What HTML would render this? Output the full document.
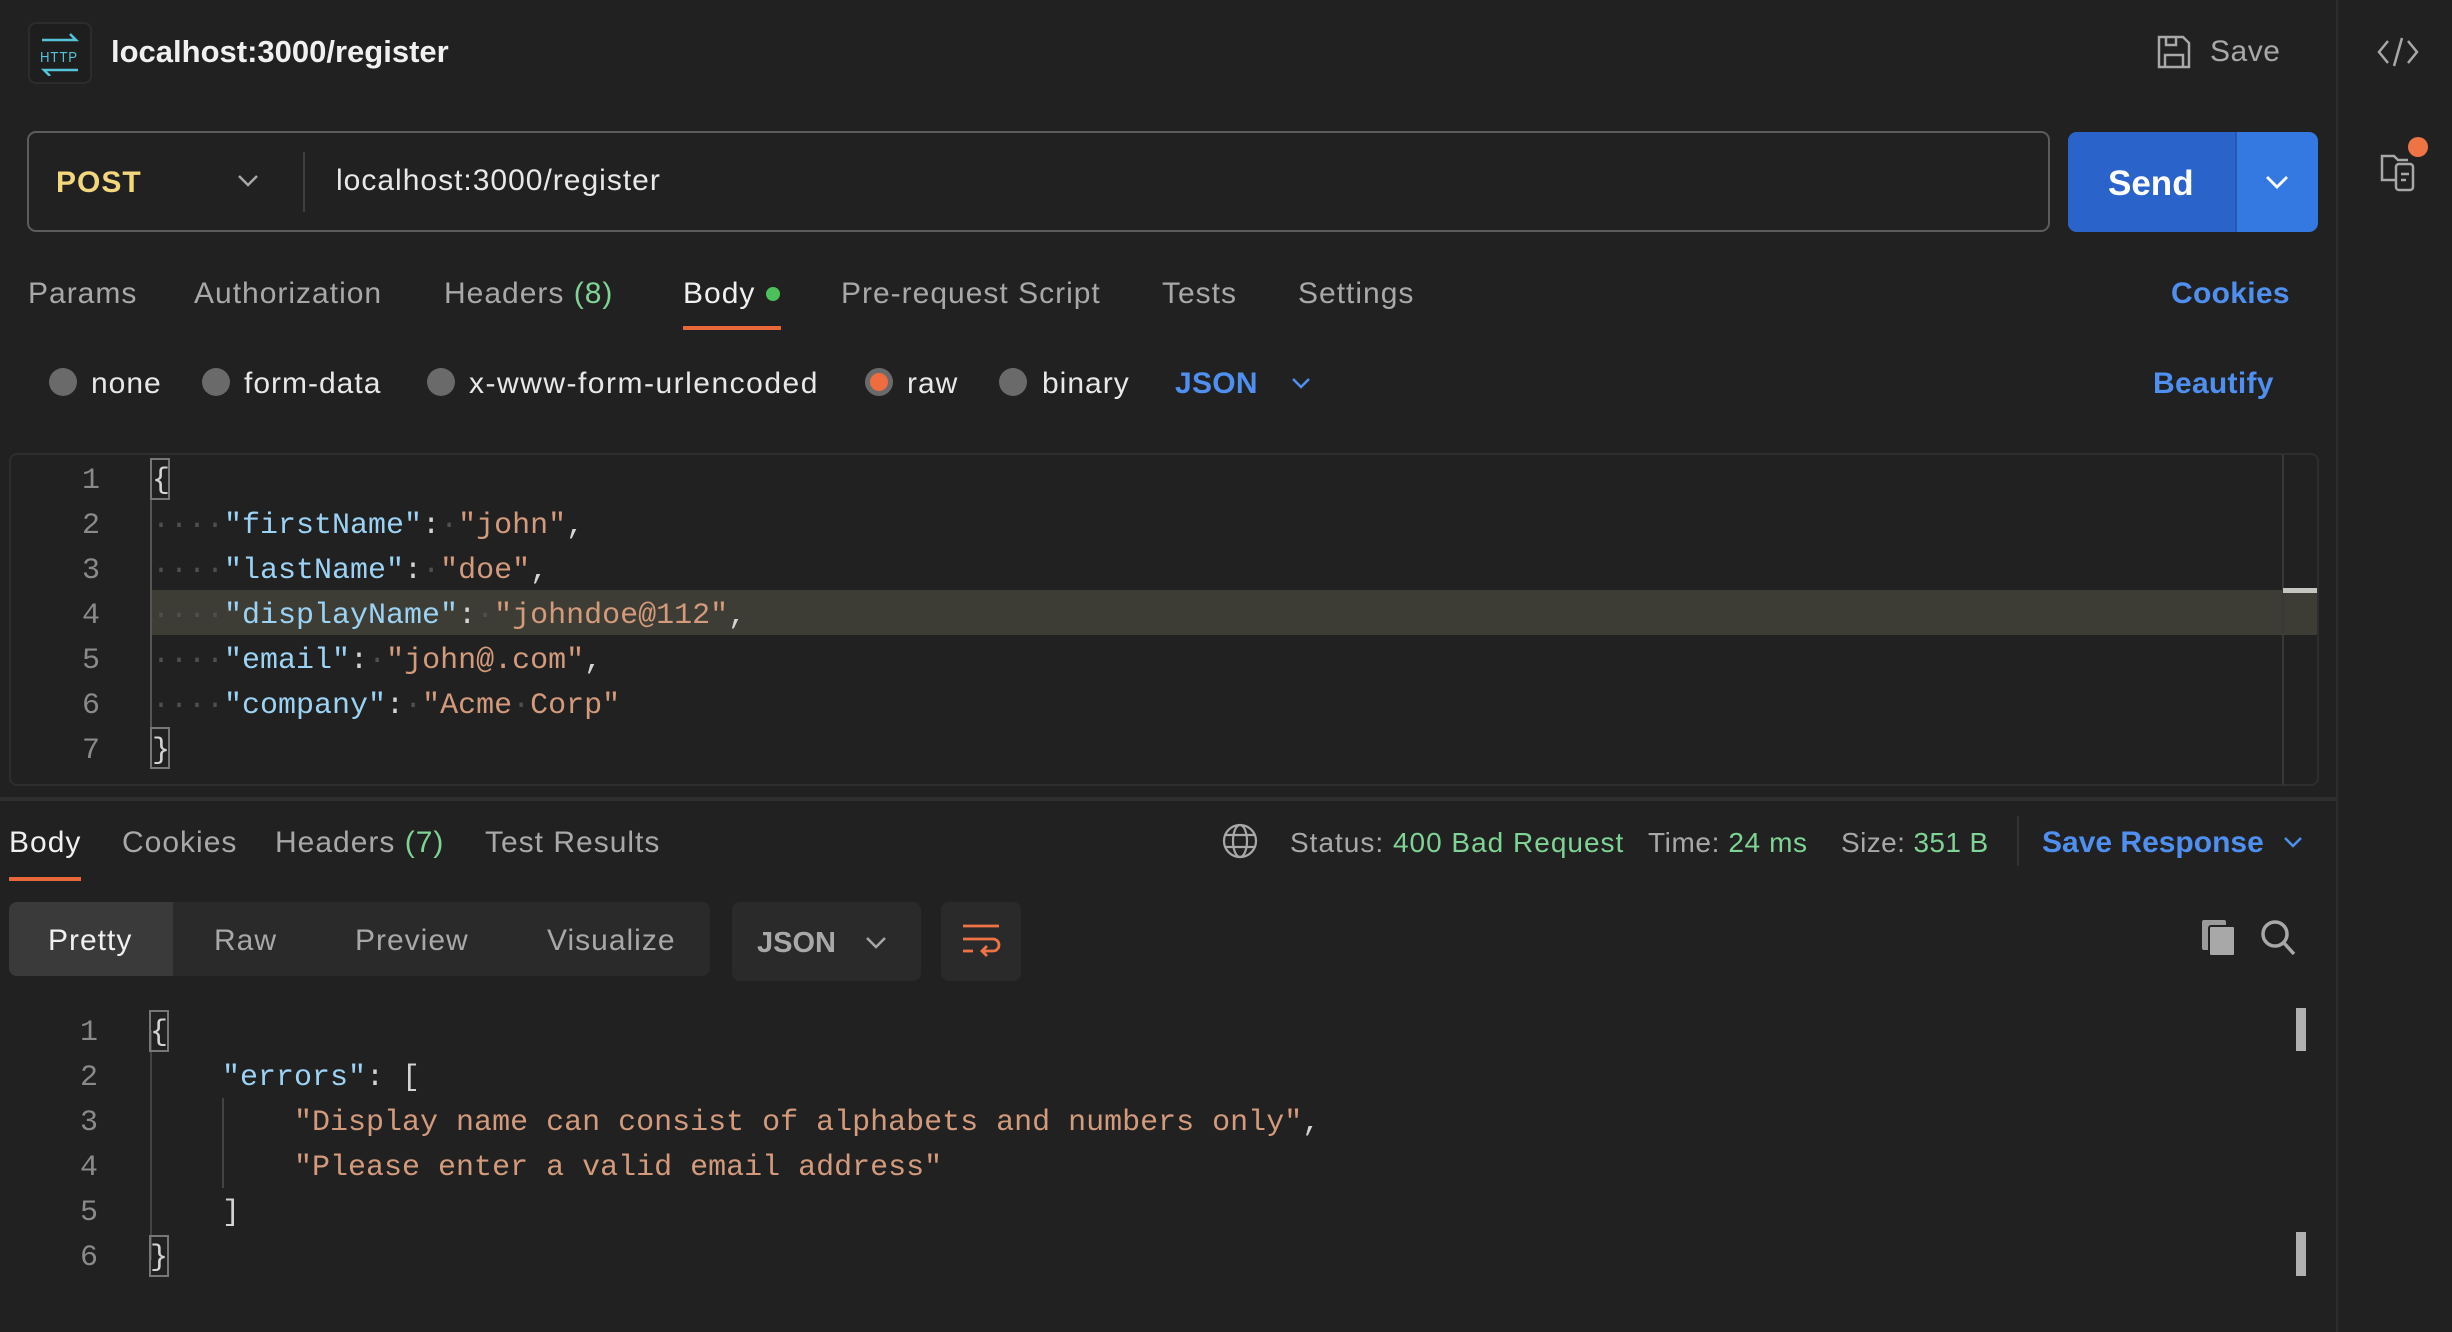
<!DOCTYPE html>
<html><head><meta charset="utf-8"><style>
*{margin:0;padding:0;box-sizing:border-box}
body{width:2452px;height:1332px;background:#212121;font-family:"Liberation Sans",sans-serif;color:#a8a8a8;position:relative;overflow:hidden;letter-spacing:1px}
.a{position:absolute;white-space:nowrap}
.t{font-size:30px;line-height:36px}
.mono{font-family:"Liberation Mono",monospace;font-size:30px;line-height:45px;letter-spacing:0}
.ln{position:absolute;width:60px;text-align:right;left:40px;color:#8a8a8a;font-family:"Liberation Mono",monospace;font-size:30px;letter-spacing:0}
.k{color:#9cd3f5}.s{color:#d39a7c}.p{color:#d4d4d4}.d{color:#4f4f4f}
.blue{color:#4f8ff0;letter-spacing:0.3px}.green{color:#7fd394}
.radio{position:absolute;width:28px;height:28px;border-radius:50%;background:#6a6a6a}
</style></head><body>

<div class="a" style="left:28px;top:22px;width:64px;height:62px;border:2px solid #2c2c2c;border-radius:8px;background:#1e1e1e"></div>
<svg class="a" style="left:36px;top:32px" width="48" height="44" viewBox="0 0 48 44"><path d="M6 8H40L34 2M42 38H8l6 6" stroke="#56c4d8" stroke-width="2.5" fill="none"/><text x="4" y="30" font-family="Liberation Sans" font-size="15" fill="#56c4d8" textLength="38" lengthAdjust="spacingAndGlyphs">HTTP</text></svg>
<div class="a" style="left:111px;top:32px;font-size:31px;line-height:40px;color:#f0f0f0;font-weight:bold;letter-spacing:0">localhost:3000/register</div>

<svg class="a" style="left:2156px;top:34px" width="36" height="36" viewBox="0 0 36 36" fill="none" stroke="#a8a8a8" stroke-width="2.5"><path d="M3 3h24l6 6v24H3z"/><path d="M10 3v8h10V3"/><path d="M9 33V21h18v12"/></svg>
<div class="a t" style="left:2210px;top:34px;font-size:30px;letter-spacing:0.5px">Save</div>

<div class="a" style="left:2336px;top:0;width:2px;height:1332px;background:#2c2c2c"></div>
<svg class="a" style="left:2376px;top:34px" width="44" height="36" viewBox="0 0 44 36" fill="none" stroke="#a8a8a8" stroke-width="2.5"><path d="M12 7L3 18l9 11M32 7l9 11-9 11M26 4l-8 28"/></svg>
<svg class="a" style="left:2378px;top:150px" width="40" height="44" viewBox="0 0 40 44" fill="none" stroke="#a8a8a8" stroke-width="2.5"><path d="M17 30H4V6h12l4 4h10"/><rect x="18" y="14" width="17" height="26" rx="3"/><path d="M23 24h8M23 30h5"/></svg>
<div class="a" style="left:2408px;top:137px;width:20px;height:20px;border-radius:50%;background:#ee7345"></div>

<div class="a" style="left:27px;top:131px;width:2023px;height:101px;border:2px solid #5c5c5c;border-radius:9px"></div>
<div class="a" style="left:56px;top:165px;font-size:30px;line-height:36px;font-weight:bold;color:#f3d77c">POST</div>
<svg class="a" style="left:236px;top:173px" width="24" height="16" viewBox="0 0 24 16"><path d="M3 3l9 9 9-9" stroke="#a8a8a8" stroke-width="2.5" fill="none"/></svg>
<div class="a" style="left:303px;top:152px;width:2px;height:60px;background:#3e3e3e"></div>
<div class="a" style="left:336px;top:163px;font-size:30px;line-height:36px;color:#e8e8e8">localhost:3000/register</div>

<div class="a" style="left:2068px;top:132px;width:250px;height:100px;border-radius:9px;background:#3479e2;overflow:hidden"><div style="width:169px;height:100px;background:#2a64cb;border-right:2px solid #2758b0"></div></div>
<div class="a" style="left:2108px;top:164px;font-size:35px;line-height:40px;font-weight:bold;color:#fff;letter-spacing:0">Send</div>
<svg class="a" style="left:2264px;top:174px" width="26" height="18" viewBox="0 0 26 18"><path d="M3 3l10 10 10-10" stroke="#fff" stroke-width="2.8" fill="none"/></svg>

<div class="a t" style="left:28px;top:276px">Params</div>
<div class="a t" style="left:194px;top:276px">Authorization</div>
<div class="a t" style="left:444px;top:276px">Headers <span class="green">(8)</span></div>
<div class="a t" style="left:683px;top:276px;color:#f0f0f0">Body</div>
<div class="a" style="left:766px;top:287px;width:14px;height:14px;border-radius:50%;background:#4dbf5b"></div>
<div class="a" style="left:683px;top:326px;width:98px;height:4px;background:#e8683a"></div>
<div class="a t" style="left:841px;top:276px">Pre-request Script</div>
<div class="a t" style="left:1162px;top:276px">Tests</div>
<div class="a t" style="left:1298px;top:276px">Settings</div>
<div class="a t blue" style="left:2171px;top:276px;font-weight:bold">Cookies</div>

<div class="radio" style="left:49px;top:368px"></div><div class="a t" style="left:91px;top:366px;color:#e8e8e8">none</div>
<div class="radio" style="left:202px;top:368px"></div><div class="a t" style="left:244px;top:366px;color:#e8e8e8">form-data</div>
<div class="radio" style="left:427px;top:368px"></div><div class="a t" style="left:469px;top:366px;color:#e8e8e8;letter-spacing:1.5px">x-www-form-urlencoded</div>
<div class="radio" style="left:865px;top:368px;background:#ee6c3f;border:5px solid #6a6a6a"></div><div class="a t" style="left:907px;top:366px;color:#e8e8e8">raw</div>
<div class="radio" style="left:999px;top:368px"></div><div class="a t" style="left:1042px;top:366px;color:#e8e8e8">binary</div>
<div class="a t blue" style="left:1175px;top:366px;font-weight:bold">JSON</div>
<svg class="a" style="left:1290px;top:376px" width="22" height="16" viewBox="0 0 22 16"><path d="M3 3l8 8 8-8" stroke="#4f8ff0" stroke-width="2.5" fill="none"/></svg>
<div class="a t blue" style="left:2153px;top:366px;font-weight:bold">Beautify</div>

<div class="a" style="left:9px;top:453px;width:2310px;height:333px;border:2px solid #2e2e2e;border-radius:8px"></div>
<div class="a" style="left:152px;top:590px;width:2165px;height:45px;background:#3d3d35"></div>
<div class="a" style="left:2282px;top:455px;width:2px;height:330px;background:#383838"></div>
<div class="a" style="left:2283px;top:588px;width:34px;height:5px;background:#c4c4c0"></div>
<div class="a" style="left:150px;top:478px;width:2px;height:290px;background:#555"></div>
<div class="a" style="left:150px;top:458px;width:20px;height:42px;border:2px solid #777"></div>
<div class="a" style="left:150px;top:727px;width:20px;height:42px;border:2px solid #777"></div>
<div class="ln" style="top:459px;line-height:45px">1<br>2<br>3<br>4<br>5<br>6<br>7</div>
<div class="a mono" style="left:152px;top:459px"><span class="p">{</span><br><span class="d">····</span><span class="k">"firstName"</span><span class="p">:</span><span class="d">·</span><span class="s">"john"</span><span class="p">,</span><br><span class="d">····</span><span class="k">"lastName"</span><span class="p">:</span><span class="d">·</span><span class="s">"doe"</span><span class="p">,</span><br><span class="d">····</span><span class="k">"displayName"</span><span class="p">:</span><span class="d">·</span><span class="s">"johndoe@112"</span><span class="p">,</span><br><span class="d">····</span><span class="k">"email"</span><span class="p">:</span><span class="d">·</span><span class="s">"john@.com"</span><span class="p">,</span><br><span class="d">····</span><span class="k">"company"</span><span class="p">:</span><span class="d">·</span><span class="s">"Acme<span class="d">·</span>Corp"</span><br><span class="p">}</span></div>

<div class="a" style="left:0;top:797px;width:2336px;height:4px;background:#2e2e2e"></div>

<div class="a t" style="left:9px;top:825px;color:#f0f0f0">Body</div>
<div class="a" style="left:9px;top:877px;width:72px;height:4px;background:#e8683a"></div>
<div class="a t" style="left:122px;top:825px">Cookies</div>
<div class="a t" style="left:275px;top:825px">Headers <span class="green">(7)</span></div>
<div class="a t" style="left:485px;top:825px">Test Results</div>

<svg class="a" style="left:1222px;top:822px" width="36" height="38" viewBox="0 0 36 38" fill="none" stroke="#a8a8a8" stroke-width="2.2"><circle cx="18" cy="19" r="16"/><ellipse cx="18" cy="19" rx="7" ry="16"/><path d="M3 13h30M3 25h30"/></svg>
<div class="a t" style="left:1290px;top:825px;font-size:28px">Status: <span class="green">400 Bad Request</span></div>
<div class="a t" style="left:1648px;top:825px;font-size:28px;letter-spacing:0.6px">Time: <span class="green">24 ms</span></div>
<div class="a t" style="left:1841px;top:825px;font-size:28px;letter-spacing:0.4px">Size: <span class="green">351 B</span></div>
<div class="a" style="left:2017px;top:816px;width:2px;height:50px;background:#333"></div>
<div class="a t blue" style="left:2042px;top:825px;font-weight:bold;letter-spacing:0">Save Response</div>
<svg class="a" style="left:2282px;top:835px" width="22" height="16" viewBox="0 0 22 16"><path d="M3 3l8 8 8-8" stroke="#4f8ff0" stroke-width="2.5" fill="none"/></svg>

<div class="a" style="left:9px;top:902px;width:701px;height:74px;border-radius:8px;background:#2a2a2a;overflow:hidden"><div style="width:164px;height:74px;background:#3a3a3a"></div></div>
<div class="a t" style="left:48px;top:923px;color:#f0f0f0">Pretty</div>
<div class="a t" style="left:214px;top:923px">Raw</div>
<div class="a t" style="left:355px;top:923px">Preview</div>
<div class="a t" style="left:547px;top:923px">Visualize</div>
<div class="a" style="left:732px;top:902px;width:189px;height:79px;border-radius:8px;background:#2a2a2a"></div>
<div class="a t" style="left:757px;top:925px;font-weight:bold;font-size:29px;letter-spacing:0">JSON</div>
<svg class="a" style="left:864px;top:935px" width="24" height="16" viewBox="0 0 24 16"><path d="M3 3l9 9 9-9" stroke="#a8a8a8" stroke-width="2.5" fill="none"/></svg>
<div class="a" style="left:941px;top:902px;width:80px;height:79px;border-radius:8px;background:#2a2a2a"></div>
<svg class="a" style="left:961px;top:922px" width="40" height="40" viewBox="0 0 40 40" fill="none" stroke="#ee7345" stroke-width="2.8"><path d="M2 4h36M2 17h30a6 6 0 010 12H22M26 24l-5 5 5 5M2 29h10"/></svg>

<svg class="a" style="left:2200px;top:918px" width="38" height="40" viewBox="0 0 38 40"><rect x="2" y="2" width="24" height="30" rx="2" fill="#9a9a9a"/><rect x="9" y="8" width="26" height="30" rx="2" fill="#a8a8a8" stroke="#212121" stroke-width="2"/></svg>
<svg class="a" style="left:2259px;top:918px" width="38" height="40" viewBox="0 0 38 40" fill="none" stroke="#a8a8a8" stroke-width="3.5"><circle cx="16" cy="16" r="12"/><path d="M25 25l10 11"/></svg>

<div class="a" style="left:2296px;top:1008px;width:10px;height:43px;background:#b0b0b0"></div>
<div class="a" style="left:2296px;top:1232px;width:10px;height:44px;background:#b0b0b0"></div>

<div class="a" style="left:150px;top:1030px;width:2px;height:230px;background:#444"></div>
<div class="a" style="left:222px;top:1098px;width:2px;height:90px;background:#444"></div>
<div class="a" style="left:149px;top:1010px;width:20px;height:42px;border:2px solid #777"></div>
<div class="a" style="left:149px;top:1235px;width:20px;height:42px;border:2px solid #777"></div>
<div class="ln" style="top:1011px;left:38px;line-height:45px">1<br>2<br>3<br>4<br>5<br>6</div>
<div class="a mono" style="left:150px;top:1011px"><span class="p">{</span><br>&nbsp;&nbsp;&nbsp;&nbsp;<span class="k">"errors"</span><span class="p">: [</span><br>&nbsp;&nbsp;&nbsp;&nbsp;&nbsp;&nbsp;&nbsp;&nbsp;<span class="s">"Display name can consist of alphabets and numbers only"</span><span class="p">,</span><br>&nbsp;&nbsp;&nbsp;&nbsp;&nbsp;&nbsp;&nbsp;&nbsp;<span class="s">"Please enter a valid email address"</span><br>&nbsp;&nbsp;&nbsp;&nbsp;<span class="p">]</span><br><span class="p">}</span></div>

</body></html>
